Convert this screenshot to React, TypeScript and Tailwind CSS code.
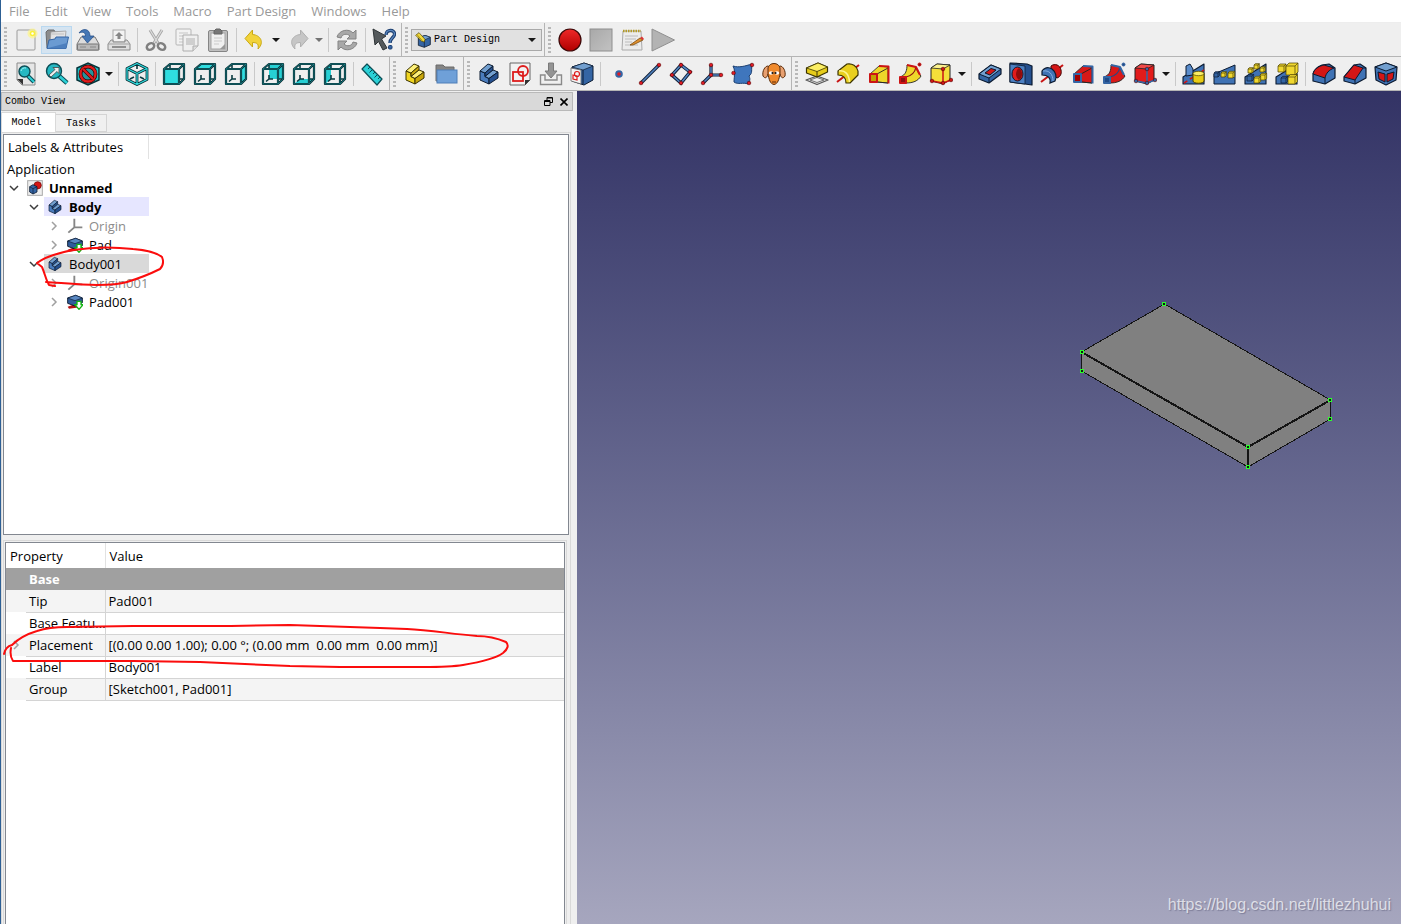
import type { ReactNode } from 'react';
import clsx from 'clsx';

type Face = 'front' | 'top' | 'right' | 'rear' | 'bottom' | 'left';

const FACES: Record<Face, string> = {
  front: '2,7 17,7 17,22 2,22',
  top: '2,7 8,2 22,2 17,7',
  right: '17,7 22,2 22,17 17,22',
  rear: '8,2 22,2 22,17 8,17',
  bottom: '2,22 8,17 22,17 17,22',
  left: '2,7 8,2 8,17 2,22',
};

const BACK_EDGES = 'M8 2V7M8 13V17H12M8 17L5 19.500M18 17H22';
const FRONT_EDGES = 'M2 7H17V22H2ZM2 7L8 2H22V17L17 22M17 7L22 2';

function ViewCube({ face }: { face: Face }) {
  const inFront = face === 'front' || face === 'top' || face === 'right';
  return (
    <g strokeLinejoin="round">
      {!inFront && <polygon points={FACES[face]} fill="#27cfd3" />}
      <path d={BACK_EDGES} fill="none" stroke="#0a3c42" strokeWidth="1.600" />
      {inFront && <polygon points={FACES[face]} fill="#2fdde0" />}
      <path d={FRONT_EDGES} fill="none" stroke="#082f35" strokeWidth="2.200" />
      <path d={FRONT_EDGES} fill="none" stroke="#1a8d92" strokeWidth="0.700" />
    </g>
  );
}

function BodyShape({ yellow }: { yellow?: boolean }) {
  const [top, side, dark, line] = yellow
    ? ['#fdf07a', '#f0d520', '#c9a70a', '#3b3300']
    : ['#729fcf', '#4a7cbd', '#25508f', '#0b1a30'];
  return (
    <g stroke={line} strokeWidth="1" strokeLinejoin="round">
      <polygon points="3,9 8,11 8,14.500 12,16.500 12,22 3,18" fill={side} />
      <polygon points="3,9 11,2 16,4 8,11" fill={top} />
      <polygon points="8,11 16,4 16,8 8,14.500" fill={dark} />
      <polygon points="8,14.500 16,8 21,10 12,16.500" fill={top} />
      <polygon points="12,16.500 21,10 21,16 12,22" fill={dark} />
    </g>
  );
}

function Dots({ at, fill = '#e01b24' }: { at: number[][]; fill?: string }) {
  return (
    <>
      {at.map(([x, y]) => (
        <circle key={`${x}-${y}`} cx={x} cy={y} r="1.8" fill={fill} stroke="#5a0000" strokeWidth="0.6" />
      ))}
    </>
  );
}

function MiniCube({ x, y, s = 5, blue }: { x: number; y: number; s?: number; blue?: boolean }) {
  return (
    <g stroke={blue ? '#0b1a30' : '#4a4000'} strokeWidth="0.7" strokeLinejoin="round">
      <path d={`M${x} ${y}l${s / 3} ${-s / 3}h${s}v${s}l${-s / 3} ${s / 3}h${-s}z`} fill={blue ? '#3465a4' : '#f0d830'} />
      <path d={`M${x} ${y}h${s}v${s}M${x + s} ${y}l${s / 3} ${-s / 3}`} fill="none" />
    </g>
  );
}

function Loft({ body, edge, dark }: { body: string; edge: string; dark: string }) {
  return (
    <g strokeLinejoin="round">
      <polygon points="3,12 12,4 21,5 21,21 10,20 3,20" fill={body} stroke="#222" strokeWidth="0.8" />
      <path d="M10 12L21 6" stroke="#222" strokeWidth="0.9" />
      <path d="M10 20L21 21" stroke="#222" strokeWidth="0.9" />
      <path d="M12 4L21.500 4.500V21.500" fill="none" stroke={edge} strokeWidth="2" />
      <rect x="3" y="12" width="7" height="8" fill={dark} stroke={edge} strokeWidth="2" />
    </g>
  );
}

function Sweep({ body, edge, dark }: { body: string; edge: string; dark: string }) {
  return (
    <g strokeLinejoin="round">
      <path d="M2 15C8 13 9 8 9 3L18 5C19 9 21 12 23 14C20 19 15 21 8 21L2 21Z" fill={body} stroke="#222" strokeWidth="0.9" />
      <path d="M8 15C13 14 17 10 18 5" fill="none" stroke={dark} strokeWidth="1.2" />
      <path d="M9 3L18 5L22 13" fill="none" stroke={edge} strokeWidth="2" />
      <rect x="2" y="15" width="6" height="6" fill={dark} stroke={edge} strokeWidth="2" />
      <circle cx="21.500" cy="2.500" r="1.500" fill={dark} stroke={edge} />
    </g>
  );
}

function PrimitiveBox({ fill, top, dot }: { fill: string; top: string; dot: string }) {
  return (
    <g strokeLinejoin="round">
      <polygon points="2,6 8,2 21,3 21,18 14,22 2,19" fill={fill} stroke="#222" />
      <polygon points="2,6 8,2 21,3 14,7" fill={top} stroke="#222" strokeWidth="0.8" />
      <path d="M14 7V20M3 19L14 21L22 18" fill="none" stroke={dot} strokeWidth="1.500" />
      <Dots at={[[14, 7], [3, 19], [14, 21], [22, 18]]} fill={dot} />
    </g>
  );
}

function Wedge() {
  return <polygon points="1,15 22,2 22,22 1,22" fill="#3f72b4" stroke="#0b1a30" strokeWidth="1.1" strokeLinejoin="round" />;
}

const ICONS: Record<string, ReactNode> = {
  new: (
    <>
      <rect x="3" y="2" width="18" height="20" rx="1" fill="#ededed" stroke="#9b9b9b" />
      <circle cx="18.500" cy="5.500" r="5" fill="#fdf58a" opacity="0.7" />
      <circle cx="18.500" cy="5.500" r="2.800" fill="#fbf03a" />
      <circle cx="18.500" cy="5.500" r="1.200" fill="#fff" />
    </>
  ),
  open: (
    <>
      <path d="M1 4L3 2H9L10 4H20V20H2Z" fill="#8c8c8c" stroke="#6c6c6c" />
      <path d="M6 4L21 3L20 14H5Z" fill="#e4e4e4" stroke="#999" strokeWidth="0.7" />
      <path d="M7 6H19" stroke="#c0c0c0" />
      <path d="M4 12L10 11L11 9H23.500L21 20.500H2Z" fill="#6b9bd2" stroke="#3465a4" />
      <path d="M3 20L22 15L21 20.500H2Z" fill="#4c7fbe" />
    </>
  ),
  save: (
    <>
      <path d="M5 9H19L23 16V22H1V16Z" fill="#dcdcdc" stroke="#777" strokeLinejoin="round" />
      <rect x="1.500" y="16" width="21" height="6" rx="1" fill="#b9b9b9" stroke="#777" />
      <path d="M4 19H10M14 19H20" stroke="#888" />
      <path d="M3 5C6 0 14 0 14 8H18L11.500 15L6 8H9.500C9.500 4 6 3.500 3 5Z" fill="#4577b5" stroke="#28528c" strokeWidth="0.8" />
    </>
  ),
  print: (
    <>
      <rect x="6" y="2" width="12" height="12" fill="#f3f3f3" stroke="#aaa" />
      <path d="M12 4L16 8H13.500V11H10.500V8H8Z" fill="#888" />
      <path d="M4 12H6V14H18V12H20L23 16V22H1V16Z" fill="#dedede" stroke="#8a8a8a" strokeLinejoin="round" />
      <path d="M1 16H23" stroke="#a2a2a2" />
      <rect x="5" y="18" width="14" height="2" fill="#8f8f8f" />
    </>
  ),
  cut: (
    <>
      <path d="M6 2L14 15M18 2L10 15" stroke="#a6a6a6" strokeWidth="3" />
      <path d="M6 2L14 15M18 2L10 15" stroke="#dedede" strokeWidth="1.200" />
      <ellipse cx="6.500" cy="18.500" rx="4" ry="3" fill="none" stroke="#808080" strokeWidth="2.500" transform="rotate(-35 6.500 18.500)" />
      <ellipse cx="17.500" cy="18.500" rx="4" ry="3" fill="none" stroke="#808080" strokeWidth="2.500" transform="rotate(35 17.500 18.500)" />
    </>
  ),
  copy: (
    <>
      <rect x="1" y="1" width="15" height="16" rx="1" fill="#f2f2f2" stroke="#b5b5b5" />
      <path d="M4 5H13M4 8H13M4 11H8M4 14H8" stroke="#c5c5c5" />
      <path d="M8 7H23V18L18 23H8Z" fill="#efefef" stroke="#adadad" />
      <path d="M11 10H20V17H11Z" fill="#cfcfcf" />
      <path d="M18 23V18H23" fill="#ddd" stroke="#adadad" />
    </>
  ),
  paste: (
    <>
      <rect x="2.500" y="2.500" width="19" height="21" rx="1.500" fill="#c0c0c0" stroke="#858585" />
      <rect x="5" y="5" width="14" height="16" fill="#f0f0f0" stroke="#a5a5a5" />
      <path d="M8 3L10 1H14L16 3V6H8Z" fill="#777" stroke="#666" />
      <path d="M8 10H16M8 13H16M8 16H13" stroke="#cacaca" />
      <path d="M14 21L19 16V21Z" fill="#999" />
    </>
  ),
  undo: <path d="M9.500 2V6.500C17 7 22 14 15 21C16 16 14 14.500 9.500 14.500V19L2 10.500Z" fill="#f2d33a" stroke="#c9a912" strokeLinejoin="round" />,
  redo: <path d="M14.500 2V6.500C7 7 2 14 9 21C8 16 10 14.500 14.500 14.500V19L22 10.500Z" fill="#c6c6c6" stroke="#b0b0b0" strokeLinejoin="round" />,
  refresh: (
    <>
      <path d="M2 9C4 2 14 0 18 5L21 2V11H12L15 8C12 5 7 6 6 10Z" fill="#a8a8a8" stroke="#838383" />
      <path d="M22 15C20 22 10 24 6 19L3 22V13H12L9 16C12 19 17 18 18 14Z" fill="#a8a8a8" stroke="#838383" />
    </>
  ),
  whatsthis: (
    <>
      <path d="M1 1L14 8L9.500 11L15 20L11 22L6.500 13.500L3 17Z" fill="#555a5c" stroke="#2e3436" />
      <path d="M14 7C14 1 23 1 22.500 6.500C22 10 18 10 18 15" fill="none" stroke="#1d3f70" strokeWidth="3.400" />
      <path d="M14 7C14 1 23 1 22.500 6.500C22 10 18 10 18 15" fill="none" stroke="#5b88c0" strokeWidth="1.200" />
      <rect x="16.500" y="17.500" width="3.500" height="3.500" rx="1" fill="#3465a4" stroke="#1d3f70" />
    </>
  ),
  record: <circle cx="12" cy="12" r="11" fill="url(#recordRed)" stroke="#3a0808" strokeWidth="1.200" />,
  stop: <rect x="1" y="1" width="22" height="22" fill="url(#stopGrey)" stroke="#8e8e8e" />,
  macros: (
    <>
      <path d="M3 3H21L22 22H2Z" fill="#ececec" stroke="#aaa" />
      <path d="M3 3H21" stroke="#b39b28" strokeWidth="2.500" strokeDasharray="1.500 1" />
      <path d="M5 8H18M5 11H16M5 14H12M5 17H18" stroke="#bcbcbc" />
      <path d="M10 17L20 10L23 12L13 17Z" fill="#e0912f" stroke="#7a4a10" strokeWidth="0.8" />
      <path d="M20 10L22 8.500L24 11L23 12Z" fill="#d33" />
    </>
  ),
  play: <polygon points="1,1 23.500,12 1,23" fill="#b3b3b3" stroke="#909090" />,
  fitAll: (
    <>
      <path d="M3 1H21V23H8L3 18Z" fill="#e6e6e6" stroke="#8b8b8b" />
      <path d="M3 17H9V23Z" fill="#333" />
      <path d="M14 14L20 20" stroke="#0b4d55" strokeWidth="4" />
      <path d="M14 14L20 20" stroke="#2bd0d6" strokeWidth="2" />
      <circle cx="10.500" cy="9.500" r="5.500" fill="#25b8c2" stroke="#0b4d55" strokeWidth="1.400" />
      <path d="M7 9A4 4 0 0 1 12 6" fill="none" stroke="#a8f3f5" />
    </>
  ),
  fitSelection: (
    <>
      <path d="M13 13L22 21" stroke="#0b4d55" strokeWidth="4.600" />
      <path d="M13 13L22 21" stroke="#2bd0d6" strokeWidth="2.600" />
      <circle cx="9" cy="9" r="7.500" fill="#25b8c2" stroke="#0b4d55" strokeWidth="1.400" />
      <path d="M4 13L10 7.500L8 5.500H14V11.500L12 9.500L6 15Z" fill="#eee" stroke="#444" strokeWidth="0.8" />
    </>
  ),
  drawStyle: (
    <>
      <polygon points="1,6 12,1 23,6 23,18 12,23 1,18" fill="#21bcc2" stroke="#07343a" strokeWidth="1.500" />
      <circle cx="12" cy="12" r="7.500" fill="#25949c" stroke="#3a0000" strokeWidth="3.800" />
      <circle cx="12" cy="12" r="7.500" fill="none" stroke="#dd1c1c" strokeWidth="2.400" />
      <path d="M7 7L17 17" stroke="#3a0000" strokeWidth="3.600" />
      <path d="M7 7L17 17" stroke="#dd1c1c" strokeWidth="2.400" />
    </>
  ),
  iso: (
    <g fill="none" strokeLinejoin="round">
      <path d="M12 3V7M5 17L9 15M19 17L15 15" stroke="#0a3c42" strokeWidth="1.600" />
      <path d="M12 1.500L22 6.500V17.500L12 22.500L2 17.500V6.500ZM2 6.500L12 11.500L22 6.500M12 11.500V22" stroke="#082f35" strokeWidth="2.800" />
      <path d="M12 1.500L22 6.500V17.500L12 22.500L2 17.500V6.500ZM2 6.500L12 11.500L22 6.500M12 11.500V22" stroke="#2fdde0" strokeWidth="1.200" />
    </g>
  ),
  front: <ViewCube face="front" />,
  top: <ViewCube face="top" />,
  right: <ViewCube face="right" />,
  rear: <ViewCube face="rear" />,
  bottom: <ViewCube face="bottom" />,
  left: <ViewCube face="left" />,
  measure: (
    <>
      <polygon points="2,7 7,2 22,17 17,23" fill="#2bd0d6" stroke="#0b4d55" strokeWidth="1.200" strokeLinejoin="round" />
      <path d="M10 5L8 7M12.500 7.500L9.500 10.500M15 10L13 12M17.500 12.500L14.500 15.500M20 15L18 17" stroke="#0b4d55" />
    </>
  ),
  part: <BodyShape yellow />,
  body: <BodyShape />,
  group: (
    <>
      <path d="M2 5V3H9L11 5H20V19H2Z" fill="#858585" stroke="#6b6b6b" />
      <rect x="3" y="8" width="20" height="13" fill="#6fa0d8" stroke="#4f7fb8" />
    </>
  ),
  sketch: (
    <>
      <path d="M2 1H22V18L17 23H2Z" fill="#f2f2f2" stroke="#666" />
      <path d="M17 23V18H22Z" fill="#333" />
      <rect x="5" y="10" width="10" height="9" fill="none" stroke="#dd1c1c" strokeWidth="1.800" />
      <circle cx="15" cy="9" r="5" fill="none" stroke="#dd1c1c" strokeWidth="1.800" />
    </>
  ),
  import: (
    <>
      <path d="M1.500 13H6V18H18V13H22.500V22.500H1.500Z" fill="#f0f0f0" stroke="#8a8a8a" strokeWidth="1.400" />
      <path d="M9.500 1H14.500V9H18L12 16L6 9H9.500Z" fill="#949494" stroke="#7a7a7a" />
    </>
  ),
  map: (
    <>
      <polygon points="2,5 14,1 23,4 23,18 14,23 2,19" fill="#3465a4" stroke="#0b1a30" strokeLinejoin="round" />
      <polygon points="2,5 14,1 23,4 13,8" fill="#729fcf" stroke="#0b1a30" strokeWidth="0.7" />
      <path d="M13 8V22" stroke="#0b1a30" />
      <polygon points="1,6 11,8 11,22 1,19" fill="#f4f4f4" stroke="#666" strokeWidth="0.8" />
      <circle cx="7" cy="12" r="2.500" fill="none" stroke="#dd1c1c" strokeWidth="1.200" />
      <path d="M3 13L7 14V18L3 17Z" fill="none" stroke="#dd1c1c" strokeWidth="1.200" />
    </>
  ),
  point: <circle cx="12" cy="12" r="2.800" fill="#e01b24" stroke="#3465a4" strokeWidth="2" />,
  line: (
    <>
      <path d="M3 21L21 3" stroke="#0b1a30" strokeWidth="3.200" />
      <path d="M3 21L21 3" stroke="#5183c0" strokeWidth="1.600" />
      <Dots at={[[3, 21], [21, 3]]} />
    </>
  ),
  plane: (
    <>
      <path d="M12 3L21 10L12 21L3 13Z" fill="none" stroke="#0b1a30" strokeWidth="3.400" />
      <path d="M12 3L21 10L12 21L3 13Z" fill="none" stroke="#5183c0" strokeWidth="1.600" />
      <Dots at={[[12, 3], [21, 10], [12, 21], [3, 13]]} />
    </>
  ),
  axes: (
    <>
      <path d="M11 3V13H21M11 13L3 21" fill="none" stroke="#0b1a30" strokeWidth="3.200" />
      <path d="M11 3V13H21M11 13L3 21" fill="none" stroke="#5183c0" strokeWidth="1.600" />
      <Dots at={[[11, 3], [21, 13], [3, 21], [11, 13]]} />
    </>
  ),
  binder: (
    <>
      <path d="M2 4C8 6 14 4 21 2C20 8 22 11 18 14C20 18 18 20 17 22C12 20 7 23 3 20C3 14 5 10 2 4Z" fill="#3f76bd" stroke="#1c3f70" />
      <Dots at={[[21, 3], [2.5, 11], [18, 21]]} />
    </>
  ),
  clone: (
    <>
      <path d="M6 4C3 4 0 9 1 14C3 17 5 16 6 12M18 4C21 4 24 9 23 14C21 17 19 16 18 12" fill="#e8a070" stroke="#5a2b08" />
      <path d="M6 6C7 0 17 0 18 6V12C17 17 16 22 12 22.500C8 22 7 17 6 12Z" fill="#f08a2c" stroke="#5a2b08" />
      <ellipse cx="9" cy="11" rx="2.200" ry="1.700" fill="#fff" />
      <ellipse cx="15" cy="11" rx="2.200" ry="1.700" fill="#fff" />
      <circle cx="10.500" cy="11" r="1.100" fill="#111" />
      <circle cx="13.500" cy="11" r="1.100" fill="#111" />
      <path d="M10 20H14" fill="none" stroke="#5a2b08" />
    </>
  ),
  pad: (
    <g strokeLinejoin="round">
      <polygon points="1,18 12,14 23,18 12,22.500" fill="#e2e2e2" stroke="#555" strokeWidth="1.300" />
      <polygon points="5,18 12,15.500 19,18 12,20.500" fill="#efefef" stroke="#555" strokeWidth="0.8" />
      <polygon points="1.500,6 13,1 22.500,5 22.500,10 12,15 1.500,11" fill="#e6cc1a" stroke="#3b3300" strokeWidth="1.200" />
      <polygon points="1.500,6 13,1 22.500,5 12,9.500" fill="#fbee63" stroke="#3b3300" strokeWidth="0.8" />
      <path d="M12 9.500V15" stroke="#3b3300" />
    </g>
  ),
  revolution: (
    <>
      <path d="M1 20L23 3" stroke="#c81414" strokeWidth="2" />
      <path d="M2 9L11 2C16 1 21 4 22 9V13L14 21H10C10 16 7 13 2 13Z" fill="#e9cf1e" stroke="#3b3300" strokeWidth="1.200" strokeLinejoin="round" />
      <path d="M3 9C9 8 13 12 13.500 20" fill="none" stroke="#fdf491" strokeWidth="1.500" />
    </>
  ),
  loft: <Loft body="#eed72a" edge="#cc1414" dark="#c4a000" />,
  sweep: <Sweep body="#eed72a" edge="#cc1414" dark="#8a1010" />,
  additive: <PrimitiveBox fill="#f4df3a" top="#fcf28e" dot="#cc1414" />,
  pocket: (
    <g strokeLinejoin="round" stroke="#0b1a30">
      <polygon points="1,12 13,3 23,7 23,12 11,21 1,17" fill="#3465a4" strokeWidth="1.200" />
      <polygon points="1,12 13,3 23,7 11,16" fill="#729fcf" />
      <polygon points="7,11 13,6.500 18,8 12,13" fill="#d41616" />
      <path d="M11 16V21" />
    </g>
  ),
  hole: (
    <g strokeLinejoin="round">
      <polygon points="1,1 18,2 23,4 23,23 16,22 1,20" fill="#25508f" stroke="#0b1a30" strokeWidth="1.200" />
      <polygon points="1,2 16,4 16,22 1,20" fill="#4c80c2" stroke="#0b1a30" strokeWidth="0.8" />
      <ellipse cx="8.500" cy="12" rx="5.500" ry="7" fill="#e01c1c" stroke="#0b1a30" />
      <path d="M10 6C6 9 6 15 10 18C14 16 14 8 10 6Z" fill="#8f0c0c" />
    </g>
  ),
  groove: (
    <>
      <path d="M1 20L23 3" stroke="#c81414" strokeWidth="2" />
      <path d="M11 4C15 1 20 3 21 8C22 12 20 15 17 16L11 10Z" fill="#d41616" stroke="#400" />
      <path d="M2 9C5 5 9 5 12 7C16 10 17 15 15 19L10 21C11 16 8 13 2 13Z" fill="#3f72b4" stroke="#0b1a30" strokeWidth="1.200" />
      <path d="M3 9C9 8 13 12 13 19" fill="none" stroke="#86b0e0" />
    </>
  ),
  subLoft: <Loft body="#d81818" edge="#3465a4" dark="#a40000" />,
  subSweep: <Sweep body="#d81818" edge="#3465a4" dark="#204a87" />,
  subtractive: <PrimitiveBox fill="#e21b1b" top="#f04a4a" dot="#3465a4" />,
  mirrored: (
    <>
      <Wedge />
      <path d="M4 4L8 2L11 7V13L4 14Z" fill="#5a8ccb" stroke="#0b1a30" />
      <path d="M2 21L22 8" stroke="#cc1414" strokeWidth="1.500" strokeDasharray="4 3" />
      <path d="M11 12C11 9 22 9 22 12V19C22 22 11 22 11 19Z" fill="#e8cc17" stroke="#4a4000" />
      <ellipse cx="16.500" cy="11.500" rx="5.500" ry="2.200" fill="#fbee63" stroke="#4a4000" strokeWidth="0.7" />
    </>
  ),
  linear: (
    <>
      <polygon points="1,12 22,3 22,22 1,22" fill="#3f72b4" stroke="#0b1a30" />
      <MiniCube x={1} y={11} s={4} blue />
      <MiniCube x={8} y={11} s={4} />
      <MiniCube x={15} y={11} />
    </>
  ),
  polar: (
    <>
      <Wedge />
      <MiniCube x={3} y={14} blue />
      <MiniCube x={4} y={7} s={4} />
      <MiniCube x={10} y={3} s={4} />
      <MiniCube x={16} y={6} s={4} />
      <MiniCube x={16} y={13} />
      <MiniCube x={10} y={16} />
    </>
  ),
  multi: (
    <>
      <Wedge />
      <MiniCube x={3} y={4} s={6} />
      <MiniCube x={11} y={4} s={9} />
      <MiniCube x={6} y={16} s={5} blue />
      <MiniCube x={13} y={15} s={7} />
    </>
  ),
  fillet: (
    <g strokeLinejoin="round" stroke="#0b1a30">
      <path d="M1 12C2 7 5 5 10 3L17 2L23 6V16L13 22L1 19Z" fill="#3f72b4" strokeWidth="1.200" />
      <path d="M1 12C2 7 7 4 12 3L22 6C17 8 14 11 13 16Z" fill="#d41616" />
      <path d="M13 16V22" />
    </g>
  ),
  chamfer: (
    <g strokeLinejoin="round" stroke="#0b1a30">
      <polygon points="1,15 11,3 17,2 23,6 23,16 12,22 1,19" fill="#3f72b4" strokeWidth="1.200" />
      <polygon points="1,15 11,3 20,6 12,18" fill="#d41616" />
      <path d="M12 18V22M20 6L23 6" />
    </g>
  ),
  draft: (
    <g strokeLinejoin="round" stroke="#0b1a30">
      <polygon points="1,5 12,1 23,5 22,18 12,23 2,18" fill="#3f72b4" strokeWidth="1.200" />
      <polygon points="1,5 12,1 23,5 12,9" fill="#729fcf" />
      <polygon points="4,10 11,12 11,20 5,17" fill="#d41616" />
      <polygon points="13,12 20,10 19,17 13,20" fill="#d41616" />
    </g>
  ),
  workbench: (
    <g strokeLinejoin="round">
      <polygon points="5,9 15,5 23,8 23,19 14,23 5,20" fill="#3465a4" stroke="#0b1a30" strokeWidth="1.200" />
      <polygon points="5,9 15,5 23,8 14,12" fill="#729fcf" stroke="#0b1a30" strokeWidth="0.8" />
      <path d="M14 12V23" stroke="#0b1a30" />
      <polygon points="1,5 6,1 15,11 14,15 10,14" fill="#f2d93a" stroke="#4a4000" />
      <path d="M3 4L11 13" stroke="#8a7400" />
    </g>
  ),
  document: (
    <>
      <rect x="1" y="1" width="22" height="22" fill="#efefef" stroke="#aaa" strokeWidth="1.500" />
      <circle cx="16" cy="8" r="5.500" fill="#d41616" stroke="#600" />
      <polygon points="4,10 9,7 15,10 15,18 9,21 4,18" fill="#3465a4" stroke="#0b1a30" strokeWidth="1.200" />
      <path d="M4 10L9 13L15 10M9 13V21" fill="none" stroke="#0b1a30" />
    </>
  ),
  origin: <path d="M11 1V14H23M11 14L2 22" fill="none" stroke="#868686" strokeWidth="2.800" />,
  padTip: (
    <>
      <path d="M1 19L12 15L20 20L3 22Z" fill="#b41414" />
      <polygon points="1,6 13,2 23,6 23,13 12,18 1,14" fill="#2f5c9c" stroke="#0b1a30" strokeWidth="1.400" />
      <polygon points="1,6 13,2 23,6 12,10" fill="#5a88c2" stroke="#0b1a30" />
      <path d="M15 11H21V16H24L18 23L12 16H15Z" fill="#fff" stroke="#12b512" strokeWidth="2" />
    </>
  ),
};

function Icon({ name, className = 'size-6' }: { name: string; className?: string }) {
  return (
    <svg viewBox="0 0 24 24" className={clsx('shrink-0', className)} aria-hidden="true">
      {ICONS[name]}
    </svg>
  );
}

function Arrow({ muted }: { muted?: boolean }) {
  return (
    <svg viewBox="0 0 8 4" className={clsx('h-1 w-2', muted ? 'text-neutral-500' : 'text-neutral-900')} aria-hidden="true">
      <path d="M0 0H8L4 4Z" fill="currentColor" />
    </svg>
  );
}

function ToolButton({ name, active }: { name: string; active?: boolean }) {
  return (
    <button
      type="button"
      aria-label={name}
      className={clsx(
        'flex h-7 w-[31px] shrink-0 items-center justify-center border',
        active ? 'border-[#b9d8f0] bg-[#d5e4f1]' : 'border-transparent',
      )}
    >
      <Icon name={name} />
    </button>
  );
}

// "|" is a separator, "v" and "v-" are the drop-down arrows of the button before them
function Tools({ items, active }: { items: string[]; active?: string }) {
  return items.map((item, i) => {
    if (item === '|') {
      return (
        <span key={i} className="flex h-6 w-[6px] shrink-0 justify-center">
          <span className="w-px bg-[#c9c9c9]" />
        </span>
      );
    }
    if (item === 'v' || item === 'v-') {
      return (
        <button key={i} type="button" aria-label={`${items[i - 1]} options`} className="flex h-7 w-3 shrink-0 items-center justify-center">
          <Arrow muted={item === 'v-'} />
        </button>
      );
    }
    return <ToolButton key={i} name={item} active={item === active} />;
  });
}

function Toolbar({ children, last }: { children: ReactNode; last?: boolean }) {
  return (
    <div className={clsx('flex shrink-0 items-center pl-[3px]', !last && 'border-r border-[#b5b5b5] pr-[2px]')}>
      <span className="mr-[3px] h-[26px] w-[3px] bg-[repeating-linear-gradient(to_bottom,#b8b8b8_0_2px,transparent_2px_4px)]" />
      {children}
    </div>
  );
}

const MENUS = ['File', 'Edit', 'View', 'Tools', 'Macro', 'Part Design', 'Windows', 'Help'];

const FILE_TOOLS = ['new', 'open', 'save', 'print', '|', 'cut', 'copy', 'paste', '|', 'undo', 'v', 'redo', 'v-', '|', 'refresh', '|', 'whatsthis'];
const MACRO_TOOLS = ['record', 'stop', 'macros', 'play'];
const VIEW_TOOLS = ['fitAll', 'fitSelection', 'drawStyle', 'v', '|', 'iso', '|', 'front', 'top', 'right', '|', 'rear', 'bottom', 'left', '|', 'measure'];
const STRUCTURE_TOOLS = ['part', 'group'];
const HELPER_TOOLS = ['body', 'sketch', 'import', 'map', '|', 'point', 'line', 'plane', 'axes', 'binder', 'clone'];
const MODELING_TOOLS = [
  'pad', 'revolution', 'loft', 'sweep', 'additive', 'v', '|',
  'pocket', 'hole', 'groove', 'subLoft', 'subSweep', 'subtractive', 'v', '|',
  'mirrored', 'linear', 'polar', 'multi', '|',
  'fillet', 'chamfer', 'draft',
];

interface TreeItem {
  label: string;
  icon: string;
  level: 0 | 1 | 2;
  open?: boolean;
  style?: string;
}

const TREE: TreeItem[] = [
  { label: 'Unnamed', icon: 'document', level: 0, open: true, style: 'font-bold' },
  { label: 'Body', icon: 'body', level: 1, open: true, style: 'font-bold bg-[#e6e6ff]' },
  { label: 'Origin', icon: 'origin', level: 2, style: 'text-[#8c8c8c]' },
  { label: 'Pad', icon: 'padTip', level: 2 },
  { label: 'Body001', icon: 'body', level: 1, open: true, style: 'bg-[#d9d9d9]' },
  { label: 'Origin001', icon: 'origin', level: 2, style: 'text-[#8c8c8c]' },
  { label: 'Pad001', icon: 'padTip', level: 2 },
];

const INDENT = ['pl-0', 'pl-5', 'pl-10'];

const PROPERTIES = [
  { name: 'Tip', value: 'Pad001' },
  { name: 'Base Featu...', value: '' },
  { name: 'Placement', value: '[(0.00 0.00 1.00); 0.00 °; (0.00 mm  0.00 mm  0.00 mm)]', expandable: true },
  { name: 'Label', value: 'Body001' },
  { name: 'Group', value: '[Sketch001, Pad001]' },
];

function Chevron({ open }: { open?: boolean }) {
  return (
    <svg viewBox="0 0 10 10" className="size-[10px]" aria-hidden="true">
      <path d={open ? 'M1 3L5 7L9 3' : 'M3 1L7 5L3 9'} fill="none" stroke={open ? '#3c3c3c' : '#a0a0a0'} strokeWidth="1.500" />
    </svg>
  );
}

function ModelTree() {
  return (
    <div className="h-[401px] shrink-0 border border-[#828790] bg-white">
      <div className="flex h-6 w-[145px] items-center border-r border-[#e2e2e2] pl-1">Labels &amp; Attributes</div>
      <div className="flex h-[19px] items-center pl-[3px]">Application</div>
      <ul className="w-[145px]">
        {TREE.map((item) => (
          <li key={item.label} className={clsx('flex h-[19px]', INDENT[item.level])}>
            <button type="button" aria-label={`Toggle ${item.label}`} className="flex w-5 shrink-0 items-center justify-center">
              <Chevron open={item.open} />
            </button>
            <span className={clsx('flex min-w-0 grow items-center gap-[6px] pl-[3px] whitespace-nowrap', item.style)}>
              <Icon name={item.icon} className="size-4" />
              {item.label}
            </span>
          </li>
        ))}
      </ul>
    </div>
  );
}

function PropertyTable() {
  return (
    <div className="grow border border-b-0 border-[#828790] bg-white">
      <table className="w-full table-fixed border-collapse text-left">
        <colgroup>
          <col className="w-5" />
          <col className="w-[79px]" />
          <col />
        </colgroup>
        <thead>
          <tr className="h-[25px]">
            <th colSpan={2} className="border-r border-[#e2e2e2] p-0 pl-1 font-normal">Property</th>
            <th className="p-0 pl-1 font-normal">Value</th>
          </tr>
        </thead>
        <tbody>
          <tr className="h-[22px] bg-[#a0a0a0] text-white">
            <td className="p-0" />
            <th colSpan={2} className="p-0 pl-[3px] font-bold">Base</th>
          </tr>
          {PROPERTIES.map((p) => (
            <tr key={p.name} className="h-[22px] odd:bg-white even:bg-[#f4f4f4]">
              <td className="p-0">
                {p.expandable && (
                  <button type="button" aria-label="Expand Placement" className="flex w-5 items-center justify-center">
                    <Chevron />
                  </button>
                )}
              </td>
              <th className="border-r border-b border-[#d4d4d4] p-0 pl-[3px] font-normal whitespace-nowrap">{p.name}</th>
              <td className="border-b border-[#d4d4d4] p-0 pl-[3px] whitespace-pre">{p.value}</td>
            </tr>
          ))}
        </tbody>
      </table>
    </div>
  );
}

function ComboView() {
  return (
    <aside className="flex w-[576px] shrink-0 flex-col bg-[#efefef] pt-px pr-[4px]">
      <header className="flex h-[19px] shrink-0 items-center border border-[#b9b9b9] bg-[#d9d9d9] pl-[3px] font-['Liberation_Mono',monospace] text-[10px]">
        <h2 className="grow">Combo View</h2>
        <button type="button" aria-label="Float panel" className="flex size-4 items-center justify-center">
          <svg viewBox="0 0 9 9" className="size-[9px]" aria-hidden="true">
            <path d="M3 3V0.500H8.500V5.500H6M3 1H8" fill="none" stroke="#000" />
            <path d="M0.500 3.500H6V8.500H0.500ZM0.500 4.500H6" fill="none" stroke="#000" />
          </svg>
        </button>
        <button type="button" aria-label="Close panel" className="flex size-4 items-center justify-center">
          <svg viewBox="0 0 8 8" className="size-2" aria-hidden="true">
            <path d="M0.500 0.500L7.500 7.500M7.500 0.500L0.500 7.500" stroke="#000" strokeWidth="1.600" />
          </svg>
        </button>
      </header>
      <div role="tablist" className="mt-px flex h-[20px] shrink-0 items-end font-['Liberation_Mono',monospace] text-[10px]">
        <button type="button" role="tab" aria-selected="true" className="h-full w-[55px] border border-b-0 border-[#d9d9d9] bg-white pr-1">
          Model
        </button>
        <button type="button" role="tab" aria-selected="false" className="h-[18px] w-[51px] border border-l-0 border-[#d4d4d4] bg-[#f0f0f0]">
          Tasks
        </button>
      </div>
      <div className="mr-[2px] flex grow flex-col gap-[5px] border border-b-0 border-[#d9d9d9] p-px pb-0">
        <ModelTree />
        <div className="mr-[2px] flex grow flex-col border border-b-0 border-[#d9d9d9] px-px pt-px">
          <PropertyTable />
        </div>
      </div>
    </aside>
  );
}

const VERTICES = [[84, 4], [2, 52], [2, 71], [250, 100], [250, 119], [168, 147], [168, 167]];

function Viewport() {
  return (
    <main className="relative min-w-0 grow overflow-hidden bg-linear-to-b from-[#333365] to-[#a6a6be]">
      <svg viewBox="0 0 256 172" shapeRendering="crispEdges" className="absolute top-[209px] left-[503px] h-[172px] w-[256px]" role="img" aria-label="Pad solid">
        <polygon points="84.500,4 250.500,100 250.500,119 168,167 1.500,71 1.500,52" fill="#808080" stroke="#151515" />
        <path d="M1.500 52L168 147L250.500 100M168 147V167" fill="none" stroke="#151515" strokeWidth="2" />
        {VERTICES.map(([x, y]) => (
          <rect key={`${x}-${y}`} x={x - 1.5} y={y - 1.5} width="3" height="3" fill="#151515" stroke="#2bff2b" />
        ))}
      </svg>
      <p className="absolute right-[10px] bottom-[7px] font-['Liberation_Sans',sans-serif] text-base text-white/70 [text-shadow:1px_1px_1px_rgb(90_90_120/0.5)]">
        https://blog.csdn.net/littlezhuhui
      </p>
    </main>
  );
}

// freehand red marks round the selected body and its placement
function Marks() {
  return (
    <svg className="pointer-events-none absolute top-0 left-0 h-[700px] w-[576px]" fill="none" stroke="#fb0d0d" strokeWidth="2" strokeLinejoin="round" strokeLinecap="round" aria-hidden="true">
      <path d="M54 286L48 285C45 280 44 274 41 267L36 263C44 257 57 253 72 250C91 247 115 247 132 249C145 250 156 253 161 257C163 262 162 266 159 269C151 273 139 278 126 282C116 285 107 285 96 285C79 285 61 283 45 282" />
      <path d="M3 654C4 649 7 646 11 645C17 639 26 634 36 631C45 628 55 627 66 627L132 626H230L289 625L379 628L406 629C430 630 450 634 476 636C490 636 498 639 505 642C508 645 507 649 502 653C494 659 480 662 462 665C450 667 435 667 422 667H376L339 667L289 666L199 662L132 661H12C10 658 9 653 10 648" />
    </svg>
  );
}

export default function App() {
  return (
    <div className="relative flex h-screen min-h-[720px] flex-col overflow-hidden border-l border-[#2d5f94] bg-[#efefef] font-['Open_Sans',sans-serif] text-[13px] leading-[18px] text-black">
      <svg className="absolute size-0" aria-hidden="true">
        <defs>
          <linearGradient id="recordRed" x1="0" y1="0" x2="0" y2="1">
            <stop offset="0" stopColor="#ef2929" />
            <stop offset="1" stopColor="#b00000" />
          </linearGradient>
          <linearGradient id="stopGrey" x1="0" y1="0" x2="1" y2="1">
            <stop offset="0" stopColor="#a8a8a8" />
            <stop offset="1" stopColor="#c2c2c2" />
          </linearGradient>
        </defs>
      </svg>

      <nav className="flex h-[23px] shrink-0 items-center gap-[15px] border-b border-[#ededed] bg-white pl-2 text-[#999]">
        {MENUS.map((m) => (
          <button key={m} type="button" className="whitespace-nowrap">{m}</button>
        ))}
      </nav>

      <div className="flex h-[34px] shrink-0 border-b border-[#b5b5b5]">
        <Toolbar>
          <Tools items={FILE_TOOLS} active="open" />
        </Toolbar>
        <Toolbar>
          <label className="relative flex items-center">
            <span className="pointer-events-none absolute left-1">
              <Icon name="workbench" className="size-4" />
            </span>
            <select aria-label="Workbench" className="h-[22px] w-[131px] appearance-none border border-[#a9a9a9] bg-[#e1e1e1] pl-[22px] font-['Liberation_Mono',monospace] text-[10px]">
              <option>Part Design</option>
            </select>
            <span className="pointer-events-none absolute right-[6px]">
              <Arrow />
            </span>
          </label>
        </Toolbar>
        <Toolbar last>
          <Tools items={MACRO_TOOLS} />
        </Toolbar>
      </div>

      <div className="flex h-[34px] shrink-0 border-b border-[#b5b5b5]">
        <Toolbar>
          <Tools items={VIEW_TOOLS} />
        </Toolbar>
        <Toolbar>
          <Tools items={STRUCTURE_TOOLS} />
        </Toolbar>
        <Toolbar>
          <Tools items={HELPER_TOOLS} />
        </Toolbar>
        <Toolbar last>
          <Tools items={MODELING_TOOLS} />
        </Toolbar>
      </div>

      <div className="flex min-h-0 grow">
        <ComboView />
        <Viewport />
      </div>
      <Marks />
    </div>
  );
}
